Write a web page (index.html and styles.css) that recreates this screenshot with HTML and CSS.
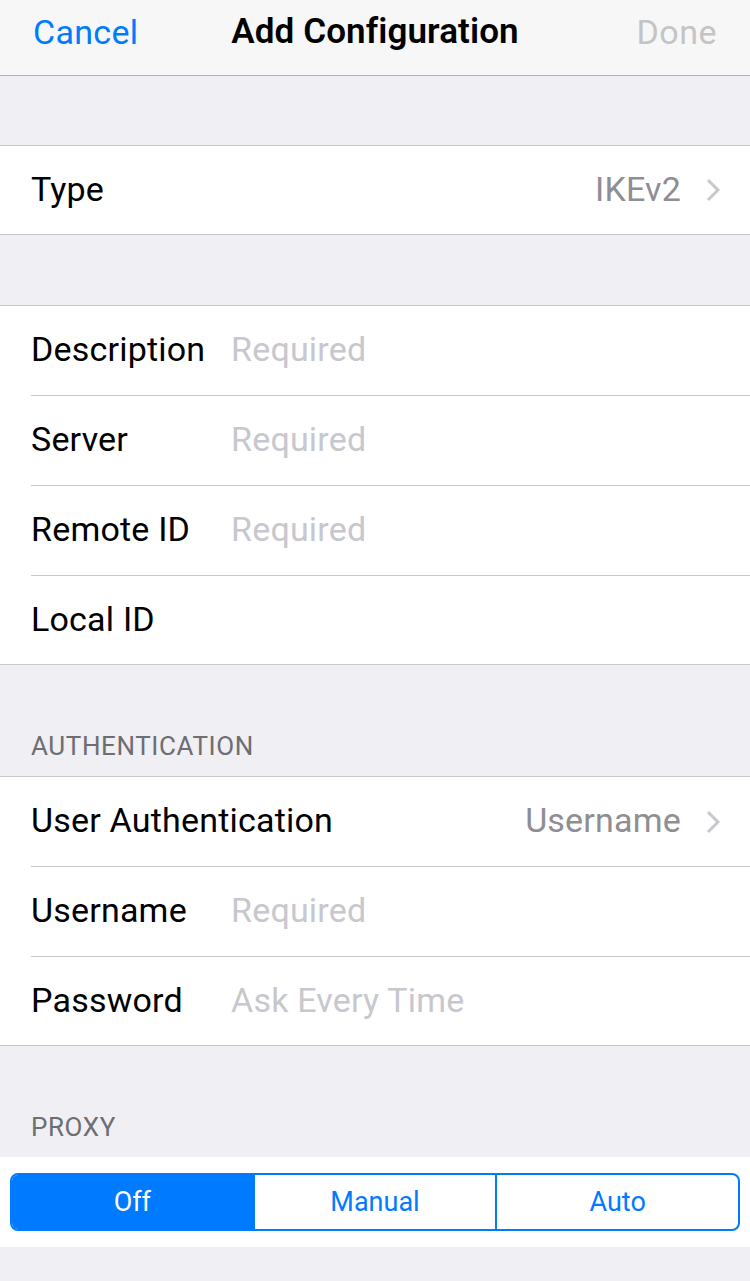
FILE: index.html
```html
<!DOCTYPE html>
<html lang="en">

<head>
    <meta charset="UTF-8">
    <meta name="viewport" content="width=device-width, initial-scale=1.0">
    <title>Add Configuration</title>
    <link rel="stylesheet" href="styles.css">
</head>

<body>
    <div class="navbar">
        <a href="#" class="nav-btn cancel">Cancel</a>
        <h1>Add Configuration</h1>
        <a href="#" class="nav-btn done">Done</a>
    </div>

    <div class="spacer"></div>
    <div class="group">
        <div class="row">
            <span class="label">Type</span>
            <span class="detail">IKEv2</span>
            <svg class="chevron" width="14" height="24" viewBox="0 0 14 24">
                <path d="M2 2 L12 12 L2 22" fill="none" stroke="#c7c7cc" stroke-width="3" />
            </svg>
        </div>
    </div>

    <div class="spacer"></div>
    <div class="group">
        <div class="row">
            <span class="label field">Description</span>
            <span class="placeholder">Required</span>
        </div>
        <div class="row">
            <span class="label field">Server</span>
            <span class="placeholder">Required</span>
        </div>
        <div class="row">
            <span class="label field">Remote ID</span>
            <span class="placeholder">Required</span>
        </div>
        <div class="row">
            <span class="label field">Local ID</span>
        </div>
    </div>

    <div class="section-header">AUTHENTICATION</div>
    <div class="group">
        <div class="row">
            <span class="label">User Authentication</span>
            <span class="detail">Username</span>
            <svg class="chevron" width="14" height="24" viewBox="0 0 14 24">
                <path d="M2 2 L12 12 L2 22" fill="none" stroke="#c7c7cc" stroke-width="3" />
            </svg>
        </div>
        <div class="row">
            <span class="label field">Username</span>
            <span class="placeholder">Required</span>
        </div>
        <div class="row">
            <span class="label field">Password</span>
            <span class="placeholder">Ask Every Time</span>
        </div>
    </div>

    <div class="section-header">PROXY</div>
    <div class="segment-wrap">
        <div class="segmented">
            <div class="segment active">Off</div>
            <div class="segment">Manual</div>
            <div class="segment">Auto</div>
        </div>
    </div>
</body>
</html>
```

FILE: styles.css
```css
body {
    font-family: Roboto, "Liberation Sans", sans-serif;
    margin: 0;
    padding: 0;
    background: #efeff4;
    color: #000;
    height: 1281px;
    overflow: hidden;
}

.navbar {
    height: 63px;
    padding-bottom: 12px;
    background: #f7f7f7;
    border-bottom: 1px solid #b2b2b2;
    display: grid;
    grid-template-columns: 1fr auto 1fr;
    align-items: center;
}

.navbar h1 {
    font-size: 35px;
    font-weight: 600;
    margin: 0;
    letter-spacing: 0.1px;
}

.nav-btn {
    font-size: 34px;
    text-decoration: none;
}

.cancel {
    color: #007aff;
    justify-self: start;
    margin-left: 33px;
    letter-spacing: 0.3px;
}

.done {
    color: #c4c4c6;
    justify-self: end;
    margin-right: 33px;
    letter-spacing: 0.5px;
}

.spacer {
    height: 69px;
}

.spacer + .group + .spacer {
    height: 70px;
}

.group {
    background: #fff;
    border-top: 1px solid #c8c7cc;
    border-bottom: 1px solid #c8c7cc;
}

.row {
    height: 90px;
    box-sizing: border-box;
    padding-bottom: 3px;
    display: flex;
    align-items: center;
    margin-left: 31px;
    padding-right: 30px;
    border-bottom: 1px solid #c8c7cc;
    font-size: 34px;
    letter-spacing: 0.2px;
}

.row:last-child {
    border-bottom: none;
    height: 88px;
}

.label {
    flex: none;
}

.label.field {
    width: 200px;
}

.placeholder {
    color: #c7c7cd;
}

.detail {
    margin-left: auto;
    color: #8e8e93;
    margin-right: 25px;
}

.chevron {
    flex: none;
    margin-top: 3px;
}

.section-header {
    height: 111px;
    box-sizing: border-box;
    padding: 0 31px 15px;
    display: flex;
    align-items: flex-end;
    font-size: 26px;
    letter-spacing: 0.6px;
    color: #6d6d72;
}

.segment-wrap {
    background: #fff;
    padding: 16px 10px;
}

.segmented {
    display: flex;
    height: 58px;
    border: 2px solid #007aff;
    border-radius: 8px;
    overflow: hidden;
    box-sizing: border-box;
}

.segment {
    flex: 1;
    display: flex;
    align-items: center;
    justify-content: center;
    font-size: 27px;
    color: #007aff;
    border-left: 2px solid #007aff;
}

.segment:first-child {
    border-left: none;
}

.segment.active {
    background: #007aff;
    color: #fff;
}
```
